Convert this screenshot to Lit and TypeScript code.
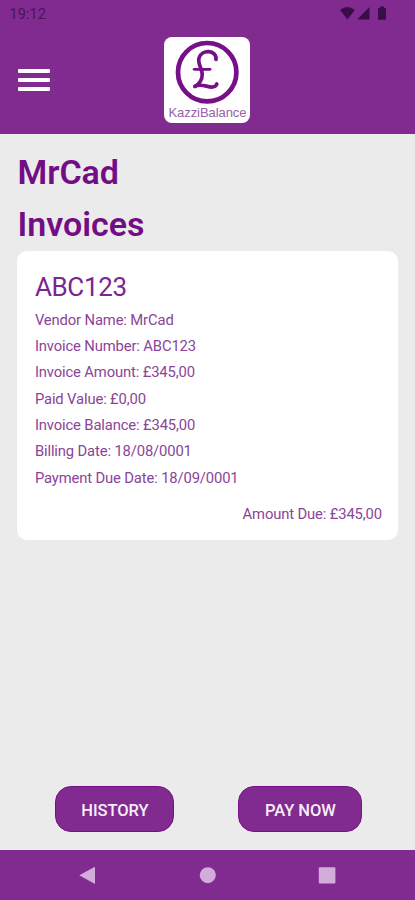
import { LitElement, html, css, svg } from "lit";
import { customElement } from "lit/decorators.js";

@customElement("status-bar")
class StatusBar extends LitElement {
  static styles = css`
    :host { display: flex; justify-content: space-between; height: 28px; padding: 0 28px 0 9.5px; color: #4a1459; }
    .time { font-size: 14.5px; line-height: 29px; letter-spacing: 0.1px; }
    svg { display: block; width: 48px; height: 28px; fill: #3a0d49; }
  `;
  render() {
    return html`<span class="time">19:12</span>
      <svg viewBox="0 0 48 28">
        <path d="M1 10 Q8.5 4 15.8 10 L8.5 19.5Z" />
        <path d="M18.2 19.5 L30.5 7 V19.5Z" />
        <path d="M39 8 h2 V6.5 h4 V8 h2 V19.7 h-8Z" />
      </svg>`;
  }
}

@customElement("brand-logo")
class BrandLogo extends LitElement {
  static styles = css`
    :host { display: block; width: 86px; height: 86px; border-radius: 8px; background: #fff; }
    svg { display: block; }
    .ring, .pound { fill: none; stroke: #760f88; stroke-width: 4.7; }
    .pound { stroke-width: 3.7; stroke-linecap: round; stroke-linejoin: round; }
    .pound .thin { stroke-width: 2.8; }
    .name { font: 13px "Liberation Sans", sans-serif; fill: #9a60a6; }
  `;
  render() {
    return html`<svg width="86" height="86" viewBox="0 0 86 86">
      ${svg`<circle class="ring" cx="43.2" cy="35.2" r="29.2" />
      <g class="pound">
        <path d="M52 22.5 C53 12.5 37.5 12.2 35 21 C33.5 27 37.8 31 38.2 37 C38.5 43 34.5 47.5 31 49.3" />
        <path d="M31 49.3 C37.5 46 43.5 50.5 48.5 50 C51 49.7 52.3 48.5 52.8 47" />
        <path class="thin" d="M30.2 32.3 H46" />
      </g>
      <text class="name" x="4.5" y="79.9" textLength="78">KazziBalance</text>`}
    </svg>`;
  }
}

@customElement("invoice-card")
class InvoiceCard extends LitElement {
  static styles = css`
    :host { display: block; box-sizing: border-box; height: 289px; padding: 20.5px 16.5px 0 17.5px; border-radius: 10px; background: #fff; color: #8a4499; }
    .title { font-size: 26px; line-height: 30px; color: #7c2490; font-weight: 400; letter-spacing: -0.35px; margin-bottom: 5px; }
    .row, .due { font-size: 14.8px; font-weight: 400; letter-spacing: -0.14px; }
    .row { line-height: 26.35px; }
    .due { line-height: 26px; text-align: right; margin-top: 10.5px; }
  `;
  render() {
    const rows = [
      "Vendor Name: MrCad",
      "Invoice Number: ABC123",
      "Invoice Amount: £345,00",
      "Paid Value: £0,00",
      "Invoice Balance: £345,00",
      "Billing Date: 18/08/0001",
      "Payment Due Date: 18/09/0001",
    ];
    return html`<div class="title">ABC123</div>
      ${rows.map((r) => html`<div class="row">${r}</div>`)}
      <div class="due">Amount Due: £345,00</div>`;
  }
}

@customElement("app-root")
class AppRoot extends LitElement {
  static styles = css`
    :host { display: flex; flex-direction: column; height: 900px; background: #ebebeb; font-family: Roboto, sans-serif; overflow: hidden; }
    header { height: 133.5px; background: #812b91; flex: none; }
    .bar { display: grid; grid-template-columns: 1fr 86px 1fr; padding: 9.2px 18.5px 0 17.5px; }
    .menu { display: flex; flex-direction: column; gap: 4.8px; padding-top: 31.6px; }
    .menu i { width: 32.5px; height: 4.1px; background: #fff; border-radius: 1px; }
    main { flex: 1; display: flex; flex-direction: column; padding: 12px 16.6px 0 17.4px; }
    h1 { margin: 0; font-size: 34px; line-height: 52px; font-weight: 600; color: #730d85; }
    invoice-card { margin-top: 1.5px; }
    .actions { display: flex; justify-content: space-between; margin-top: auto; padding: 0 36px 18px 38px; }
    button { font: 500 16.5px Roboto, sans-serif; letter-spacing: -0.05px; height: 46px; padding: 2px 0 0; border: 1px solid #760f88; border-radius: 16px; background: #812b91; color: #f7eef9; }
    .history { width: 119px; }
    .pay { width: 124px; }
    nav { height: 50px; flex: none; background: #812b91; }
    nav svg { display: block; fill: #d3add9; }
  `;
  render() {
    return html`<header>
        <status-bar></status-bar>
        <div class="bar"><div class="menu"><i></i><i></i><i></i></div><brand-logo></brand-logo></div>
      </header>
      <main>
        <h1>MrCad</h1>
        <h1>Invoices</h1>
        <invoice-card></invoice-card>
        <div class="actions">
          <button class="history">HISTORY</button>
          <button class="pay">PAY NOW</button>
        </div>
      </main>
      <nav>
        <svg width="415" height="50" viewBox="0 0 415 50">
          <path d="M79.3 25.3 L95 16.8 V34Z" />
          <circle cx="207.8" cy="25.2" r="8" />
          <rect x="318.8" y="17.2" width="16.6" height="16.4" rx="1" />
        </svg>
      </nav>`;
  }
}
